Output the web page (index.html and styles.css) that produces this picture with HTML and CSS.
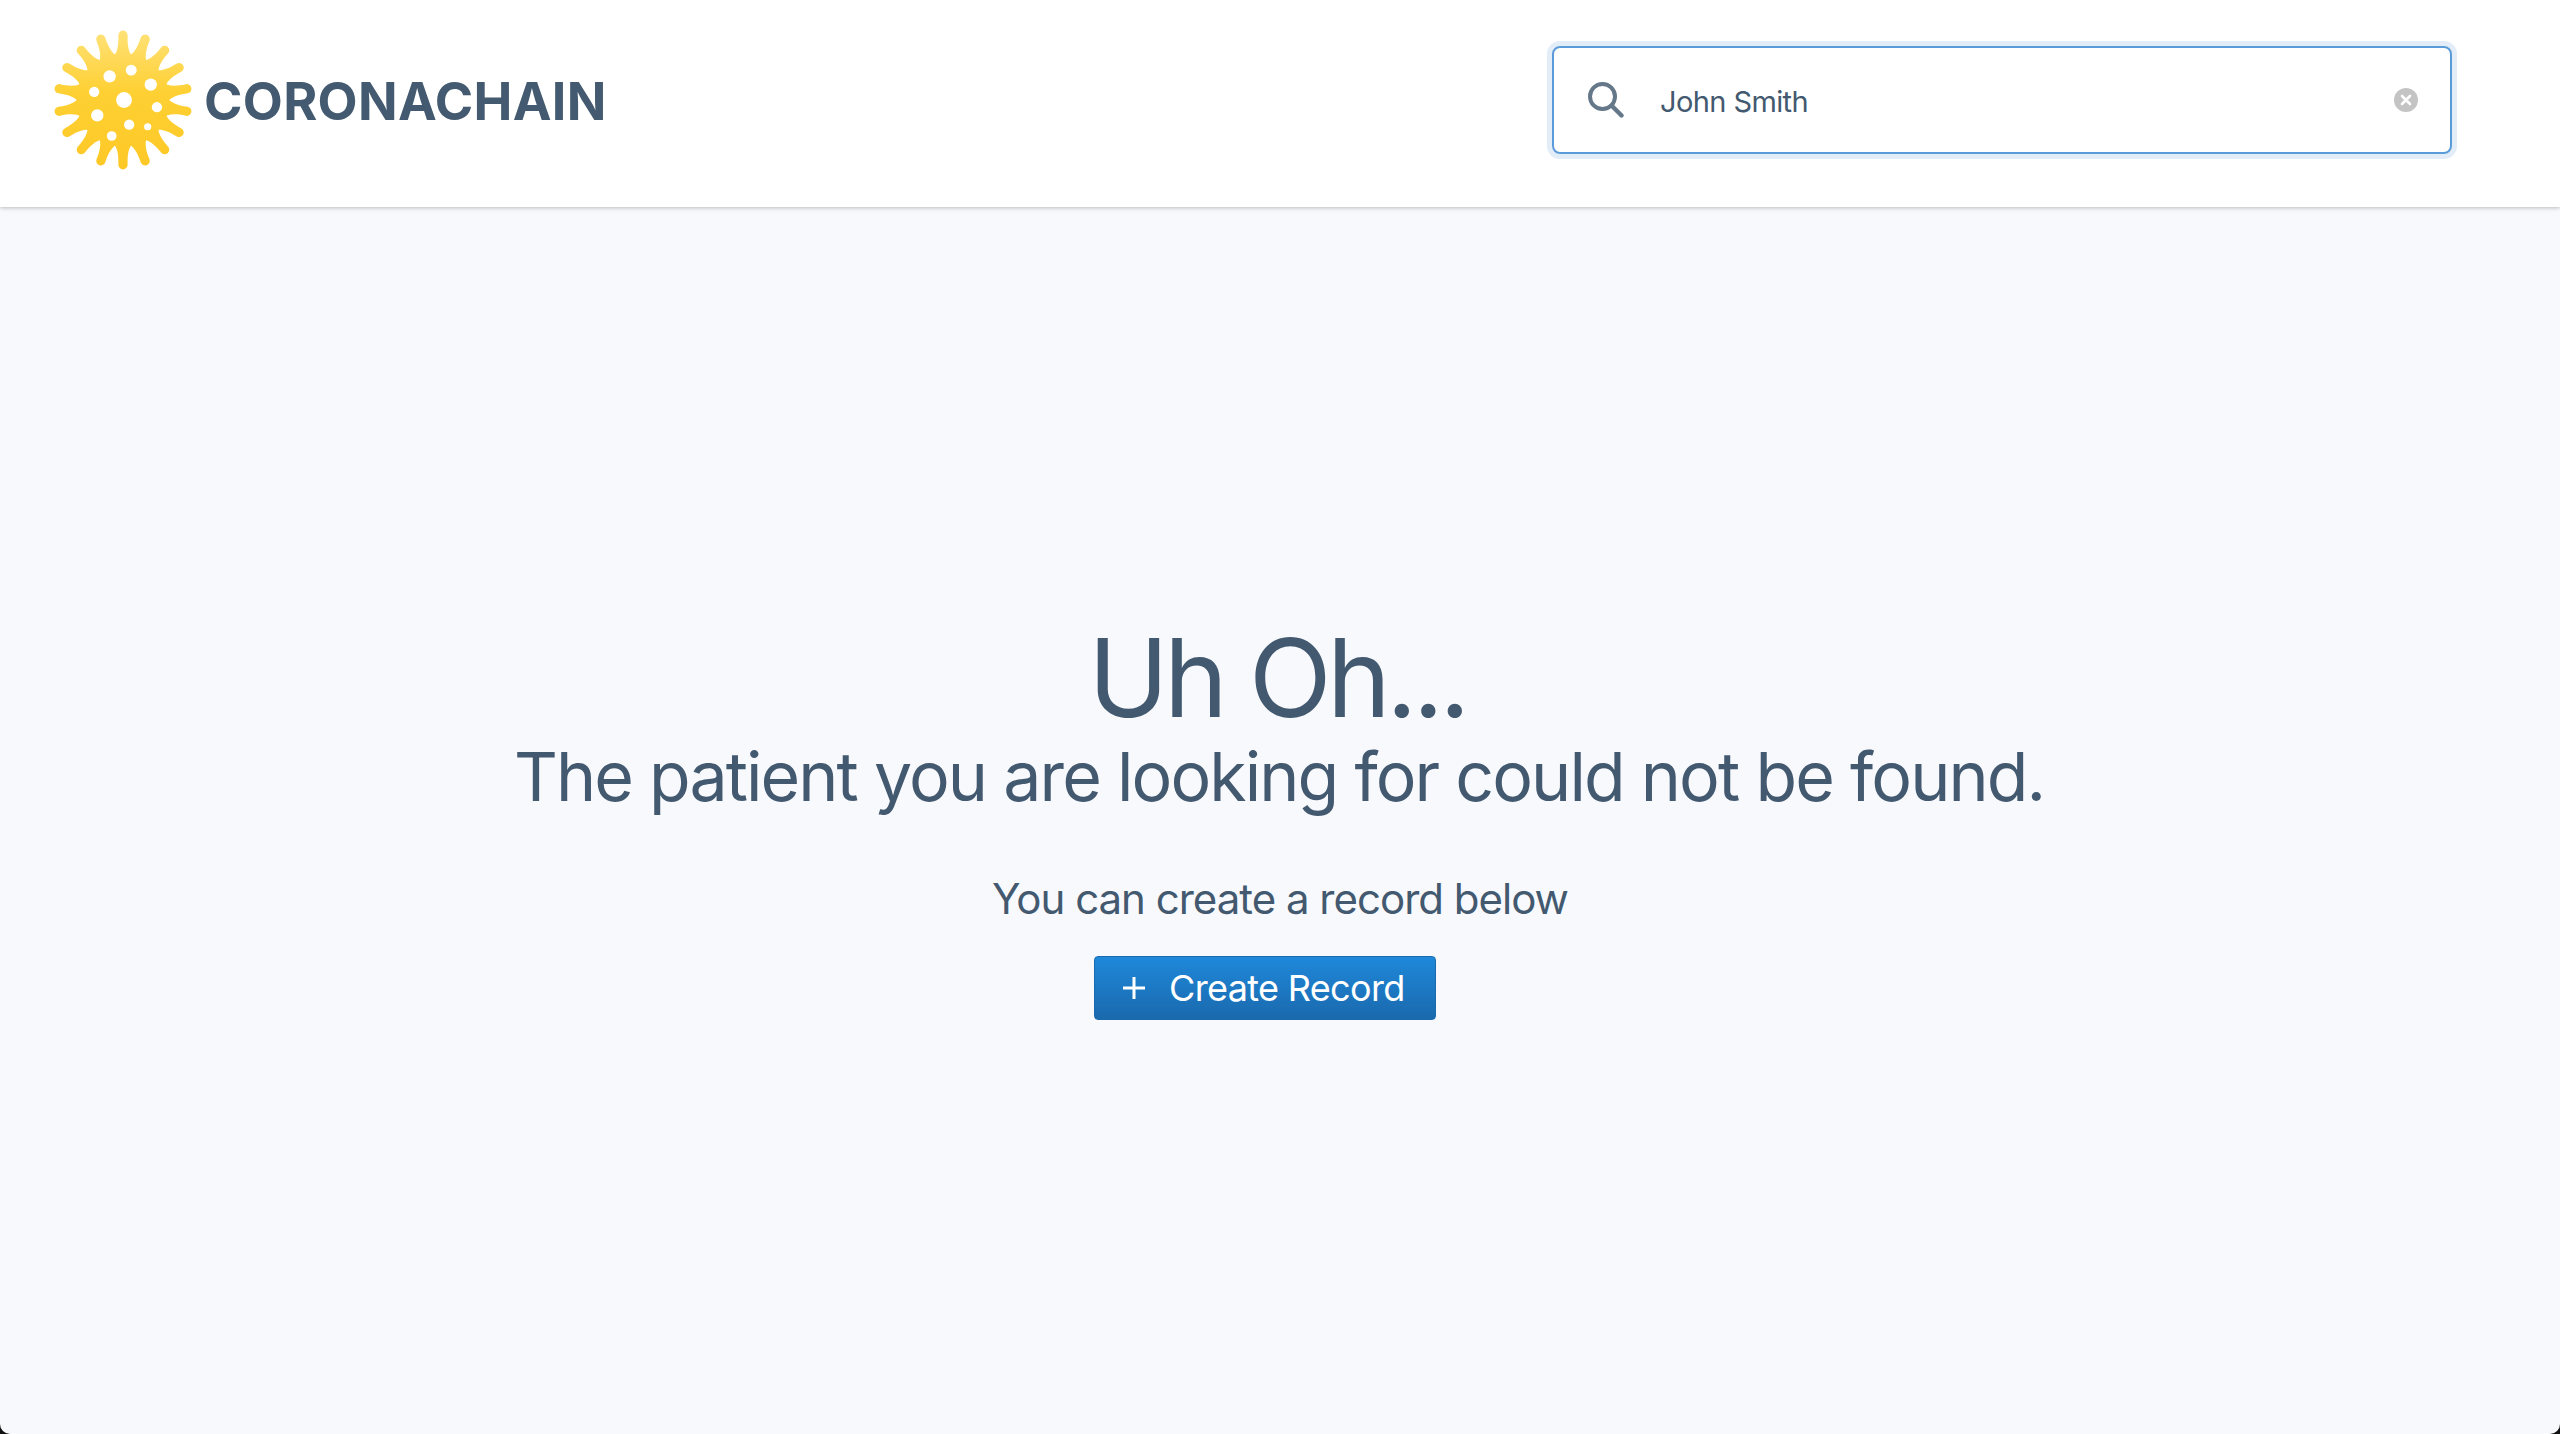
FILE: index.html
```html
<!DOCTYPE html>
<html lang="en">
<head>
    <meta charset="UTF-8">
    <title>Coronachain</title>
    <link rel="stylesheet" href="styles.css">
</head>
<body>
    <div class="header">
        <div class="brand">
            <svg class="logo" viewBox="-70 -70 140 140" width="144" height="144">
                <defs>
                    <linearGradient id="sun" x1="0" y1="0" x2="0" y2="1">
                        <stop offset="0" stop-color="#ffe27a"/>
                        <stop offset="0.45" stop-color="#fed033"/>
                        <stop offset="1" stop-color="#fdc826"/>
                    </linearGradient>
                    <path id="spike" d="M-16 -37 C-7 -42 -4 -48 -4.5 -63 A4.5 4.5 0 0 1 4.5 -63 C4 -48 7 -42 16 -37 Z"/>
                    <mask id="virus">
                        <g fill="#fff">
                            <circle r="45"/>
                            <use href="#spike"/>
                            <use href="#spike" transform="rotate(20)"/>
                            <use href="#spike" transform="rotate(40)"/>
                            <use href="#spike" transform="rotate(60)"/>
                            <use href="#spike" transform="rotate(80)"/>
                            <use href="#spike" transform="rotate(100)"/>
                            <use href="#spike" transform="rotate(120)"/>
                            <use href="#spike" transform="rotate(140)"/>
                            <use href="#spike" transform="rotate(160)"/>
                            <use href="#spike" transform="rotate(180)"/>
                            <use href="#spike" transform="rotate(200)"/>
                            <use href="#spike" transform="rotate(220)"/>
                            <use href="#spike" transform="rotate(240)"/>
                            <use href="#spike" transform="rotate(260)"/>
                            <use href="#spike" transform="rotate(280)"/>
                            <use href="#spike" transform="rotate(300)"/>
                            <use href="#spike" transform="rotate(320)"/>
                            <use href="#spike" transform="rotate(340)"/>
                        </g>
                        <g fill="#000">
                            <circle cx="1" cy="0" r="7.7"/>
                            <circle cx="8" cy="-29" r="5.3"/>
                            <circle cx="-13" cy="-23" r="6"/>
                            <circle cx="27" cy="-15" r="6"/>
                            <circle cx="-28" cy="-8" r="5"/>
                            <circle cx="33" cy="7" r="5"/>
                            <circle cx="-25" cy="15" r="6"/>
                            <circle cx="6" cy="24" r="5"/>
                            <circle cx="-11" cy="35" r="4.7"/>
                            <circle cx="24" cy="26" r="3.5"/>
                        </g>
                    </mask>
                </defs>
                <rect x="-70" y="-70" width="140" height="140" fill="url(#sun)" mask="url(#virus)"/>
            </svg>
            <span class="brand-name">CORONACHAIN</span>
        </div>
        <div class="search">
            <svg class="search-icon" viewBox="0 0 36 36" width="36" height="36">
                <circle cx="14.5" cy="14.5" r="12.5" fill="none" stroke="#64788a" stroke-width="4"/>
                <line x1="23.5" y1="23.5" x2="33.5" y2="33.5" stroke="#64788a" stroke-width="4.4" stroke-linecap="round"/>
            </svg>
            <span class="search-text">John Smith</span>
            <svg class="clear-icon" viewBox="0 0 24 24" width="24" height="24">
                <circle cx="12" cy="12" r="12" fill="#c4c4c4"/>
                <path d="M8 8l8 8M16 8l-8 8" stroke="#fff" stroke-width="2.6" stroke-linecap="round"/>
            </svg>
        </div>
    </div>

    <div class="main">
        <h1>Uh Oh...</h1>
        <h2>The patient you are looking for could not be found.</h2>
        <p>You can create a record below</p>
        <button class="create-btn">
            <svg class="plus" viewBox="0 0 22 22" width="22" height="22">
                <path d="M11 0v22M0 11h22" stroke="#fff" stroke-width="3"/>
            </svg>
            Create Record
        </button>
    </div>
</body>
</html>
```

FILE: styles.css
```css
html, body {
    height: 100%;
}
html {
    background: #111;
}
body {
    margin: 0;
    font-family: Inter, 'Noto Sans', sans-serif;
    background-color: #f8f9fd;
    color: #43596f;
    display: flex;
    flex-direction: column;
    border-radius: 0 0 10px 10px;
    overflow: hidden;
}
.header {
    height: 207px;
    box-sizing: border-box;
    background: white;
    box-shadow: 0 1px 4px rgba(0,0,0,0.25);
    display: flex;
    align-items: center;
    justify-content: space-between;
    padding: 0 108px 7px 51px;
}
.brand {
    display: flex;
    align-items: center;
    gap: 9px;
}
.brand-name {
    font-size: 52px;
    font-weight: 700;
    letter-spacing: 0.3px;
    color: #445a70;
    padding-top: 3px;
}
.search {
    width: 900px;
    height: 108px;
    box-sizing: border-box;
    border: 2px solid #5b9bd9;
    border-radius: 8px;
    box-shadow: 0 0 0 5px #e2edf8;
    display: flex;
    align-items: center;
    padding: 0 32px 0 34px;
}
.search-text {
    flex: 1;
    font-size: 29px;
    letter-spacing: -0.6px;
    margin-left: 36px;
    padding-top: 3px;
}
.main {
    flex: 1;
    display: flex;
    flex-direction: column;
    align-items: center;
    padding-top: 406px;
}
h1 {
    font-size: 108px;
    font-weight: 400;
    letter-spacing: -4.6px;
    margin: 0;
    padding-right: 6px;
    line-height: 130px;
}
h2 {
    font-size: 68px;
    font-weight: 400;
    letter-spacing: -1.93px;
    margin: -8px 0 0;
    padding-right: 2px;
    line-height: 82px;
}
p {
    font-size: 42px;
    letter-spacing: -1px;
    margin: 52px 0 0;
    line-height: 60px;
}
.create-btn {
    margin: 27px 30px 0 0;
    height: 64px;
    width: 342px;
    border: 1px solid #1a6aad;
    border-radius: 4px;
    background: linear-gradient(#1f88da, #1a69ad);
    color: white;
    font-family: inherit;
    font-size: 36px;
    letter-spacing: -0.65px;
    display: flex;
    align-items: center;
    padding: 0 0 0 28px;
}
.plus {
    margin-right: 24px;
}
```
